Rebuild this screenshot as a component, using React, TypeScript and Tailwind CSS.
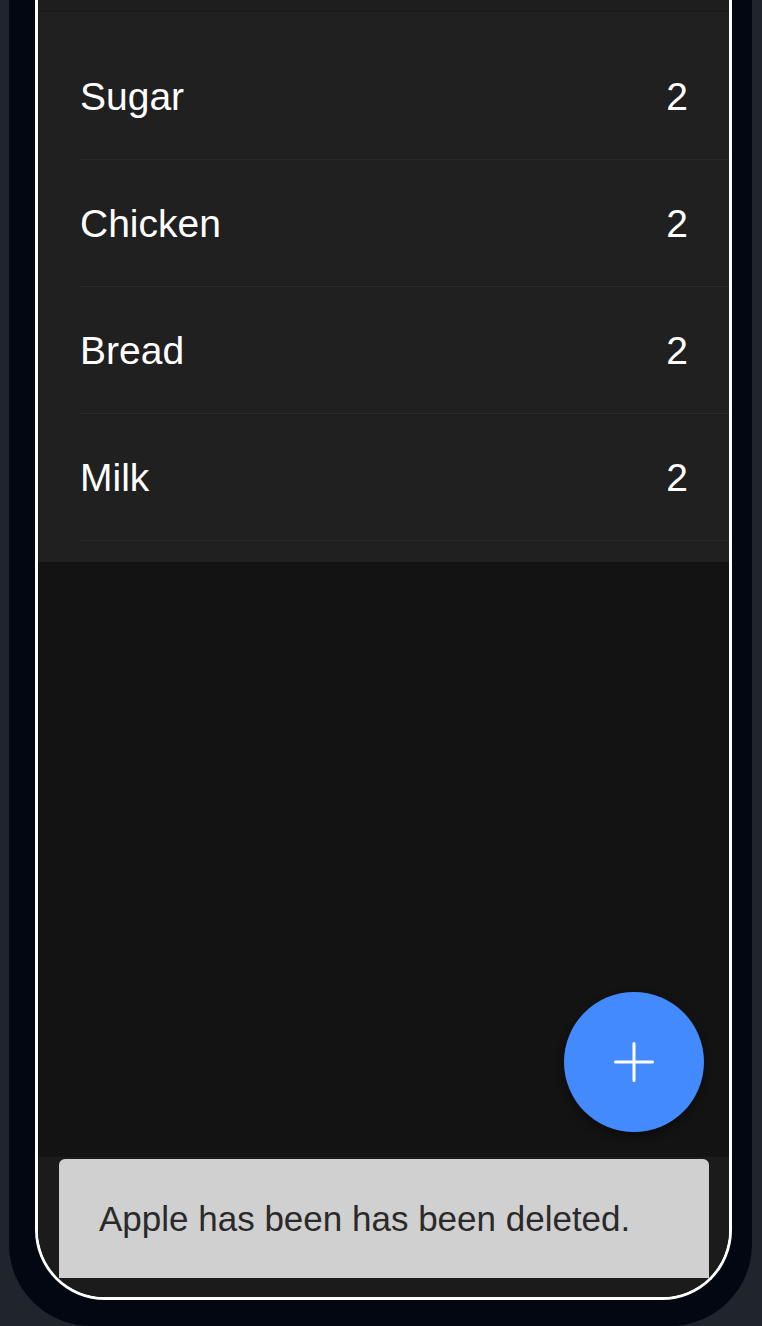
import { useState } from "react";

type Item = { name: string; qty: number };

const items: Item[] = [
	{ name: "Sugar", qty: 2 },
	{ name: "Chicken", qty: 2 },
	{ name: "Bread", qty: 2 },
	{ name: "Milk", qty: 2 },
];

export default function App() {
	const [toast] = useState<string>("Apple has been has been deleted.");

	return (
		<main className="h-[1326px] overflow-hidden bg-[#20242c] font-['Liberation_Sans',Arial,sans-serif]">
			<div className="ml-[9px] w-[743px] h-[1326px] bg-[#020711] rounded-b-[82px] pl-[26px] pr-[20px] pb-[26px]">
				<div className="h-full border-x-[3px] border-b-[3px] border-white rounded-b-[70px] overflow-hidden flex flex-col bg-[#131313]">
					{/* app bar edge */}
					<div className="h-[12px] bg-[#1e1e1e] border-b border-[#1a1a1a] shadow-[0_1px_2px_rgba(0,0,0,0.35)]" />

					{/* list */}
					<ul className="bg-[#202020] pt-[21px] pb-[21px]">
						{items.map((item) => (
							<li key={item.name} className="pl-[42px]">
								<div className="h-[127px] flex items-center justify-between pr-[41px] border-b border-[#2a2a2a] text-white text-[39px] leading-none">
									<span>{item.name}</span>
									<span>{item.qty}</span>
								</div>
							</li>
						))}
					</ul>

					{/* empty area + fab */}
					<div className="flex-1 flex items-end justify-end p-[25px]">
						<button className="w-[140px] h-[140px] rounded-full bg-[#448aff] flex items-center justify-center shadow-[0_4px_10px_rgba(0,0,0,0.45)]">
							<svg width="40" height="40" viewBox="0 0 40 40" fill="none" stroke="white" strokeWidth="3" strokeLinecap="round">
								<path d="M20 1.5v37M1.5 20h37" />
							</svg>
						</button>
					</div>

					{/* snackbar */}
					<div className="h-[140px] bg-[#1b1b1b] pt-[2px] pl-[21px] pr-[20px] pb-[19px]">
						<div className="h-full bg-[#d0d0d0] rounded-t-[6px] flex items-center pl-[40px] text-[#2a2a2a] text-[35px] leading-none">
							{toast}
						</div>
					</div>
				</div>
			</div>
		</main>
	);
}
